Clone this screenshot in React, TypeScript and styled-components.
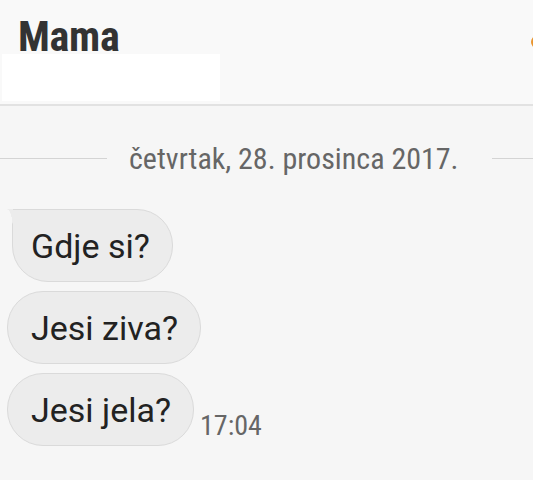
import React from "react";
import styled, { createGlobalStyle } from "styled-components";

const Global = createGlobalStyle`
  html, body { margin: 0; padding: 0; }
  body {
    width: 533px;
    height: 480px;
    overflow: hidden;
    background: #f6f6f6;
    font-family: Roboto, "Liberation Sans", sans-serif;
  }
`;

const Page = styled.div`
  width: 533px;
  height: 480px;
  display: flex;
  flex-direction: column;
  overflow: hidden;
`;

const Header = styled.header`
  position: relative;
  height: 106px;
  box-sizing: border-box;
  background: #f9f9f9;
  border-bottom: 2px solid #e2e2e2;
  display: flex;
  flex-direction: column;
  padding: 15px 0 0 2px;
`;

const Title = styled.h1`
  margin: 0 0 0 16px;
  font-family: "Roboto Condensed", Roboto, sans-serif;
  font-weight: 700;
  font-size: 42px;
  line-height: 44px;
  color: #333;
  letter-spacing: -0.3px;
`;

const Redacted = styled.div`
  margin-top: -5px;
  width: 218px;
  height: 47px;
  background: #ffffff;
`;

const EdgeIcon = styled.div`
  position: absolute;
  right: -9px;
  top: 36px;
  width: 11px;
  height: 12px;
  border-radius: 50%;
  background: #e9952f;
`;

const DateRow = styled.div`
  display: flex;
  align-items: center;
  margin-top: 37px;
  height: 30px;
`;

const Rule = styled.div<{ $width?: number }>`
  height: 1px;
  background: #d4d4d4;
  ${(p) => (p.$width ? `width: ${p.$width}px;` : "flex: 1;")}
`;

const DateText = styled.span`
  margin: 0 33px 0 22px;
  font-family: "Roboto Condensed", Roboto, sans-serif;
  font-size: 30px;
  color: #666;
  white-space: nowrap;
`;

const Thread = styled.div`
  display: flex;
  flex-direction: column;
  align-items: flex-start;
  gap: 9px;
  margin-top: 36px;
  padding-left: 7px;
`;

const Row = styled.div`
  display: flex;
  align-items: flex-end;
  gap: 6px;
`;

const Bubble = styled.div<{ $first?: boolean }>`
  position: relative;
  height: 73px;
  box-sizing: border-box;
  display: flex;
  align-items: center;
  padding: 0 22px 0 23px;
  background: #ececec;
  border: 1px solid #dadada;
  border-radius: 36px;
  font-size: 34px;
  color: #222;
  white-space: nowrap;
  ${(p) =>
    p.$first &&
    `
    margin-left: 5px;
    padding-left: 18px;
    border-top-left-radius: 0;
    &::before {
      content: "";
      position: absolute;
      left: -6px;
      top: -1px;
      width: 6px;
      height: 22px;
      background: radial-gradient(ellipse 6px 22px at 0 100%, transparent 97%, #ececec 100%);
    }
  `}
`;

const Time = styled.span`
  font-family: "Roboto Condensed", Roboto, sans-serif;
  font-size: 28px;
  line-height: 28px;
  color: #666;
  margin-bottom: 6px;
`;

export default function App() {
  return (
    <Page>
      <Global />
      <Header>
        <Title>Mama</Title>
        <Redacted />
        <EdgeIcon />
      </Header>
      <DateRow>
        <Rule $width={107} />
        <DateText>četvrtak, 28. prosinca 2017.</DateText>
        <Rule />
      </DateRow>
      <Thread>
        <Bubble $first>Gdje si?</Bubble>
        <Bubble>Jesi ziva?</Bubble>
        <Row>
          <Bubble>Jesi jela?</Bubble>
          <Time>17:04</Time>
        </Row>
      </Thread>
    </Page>
  );
}
